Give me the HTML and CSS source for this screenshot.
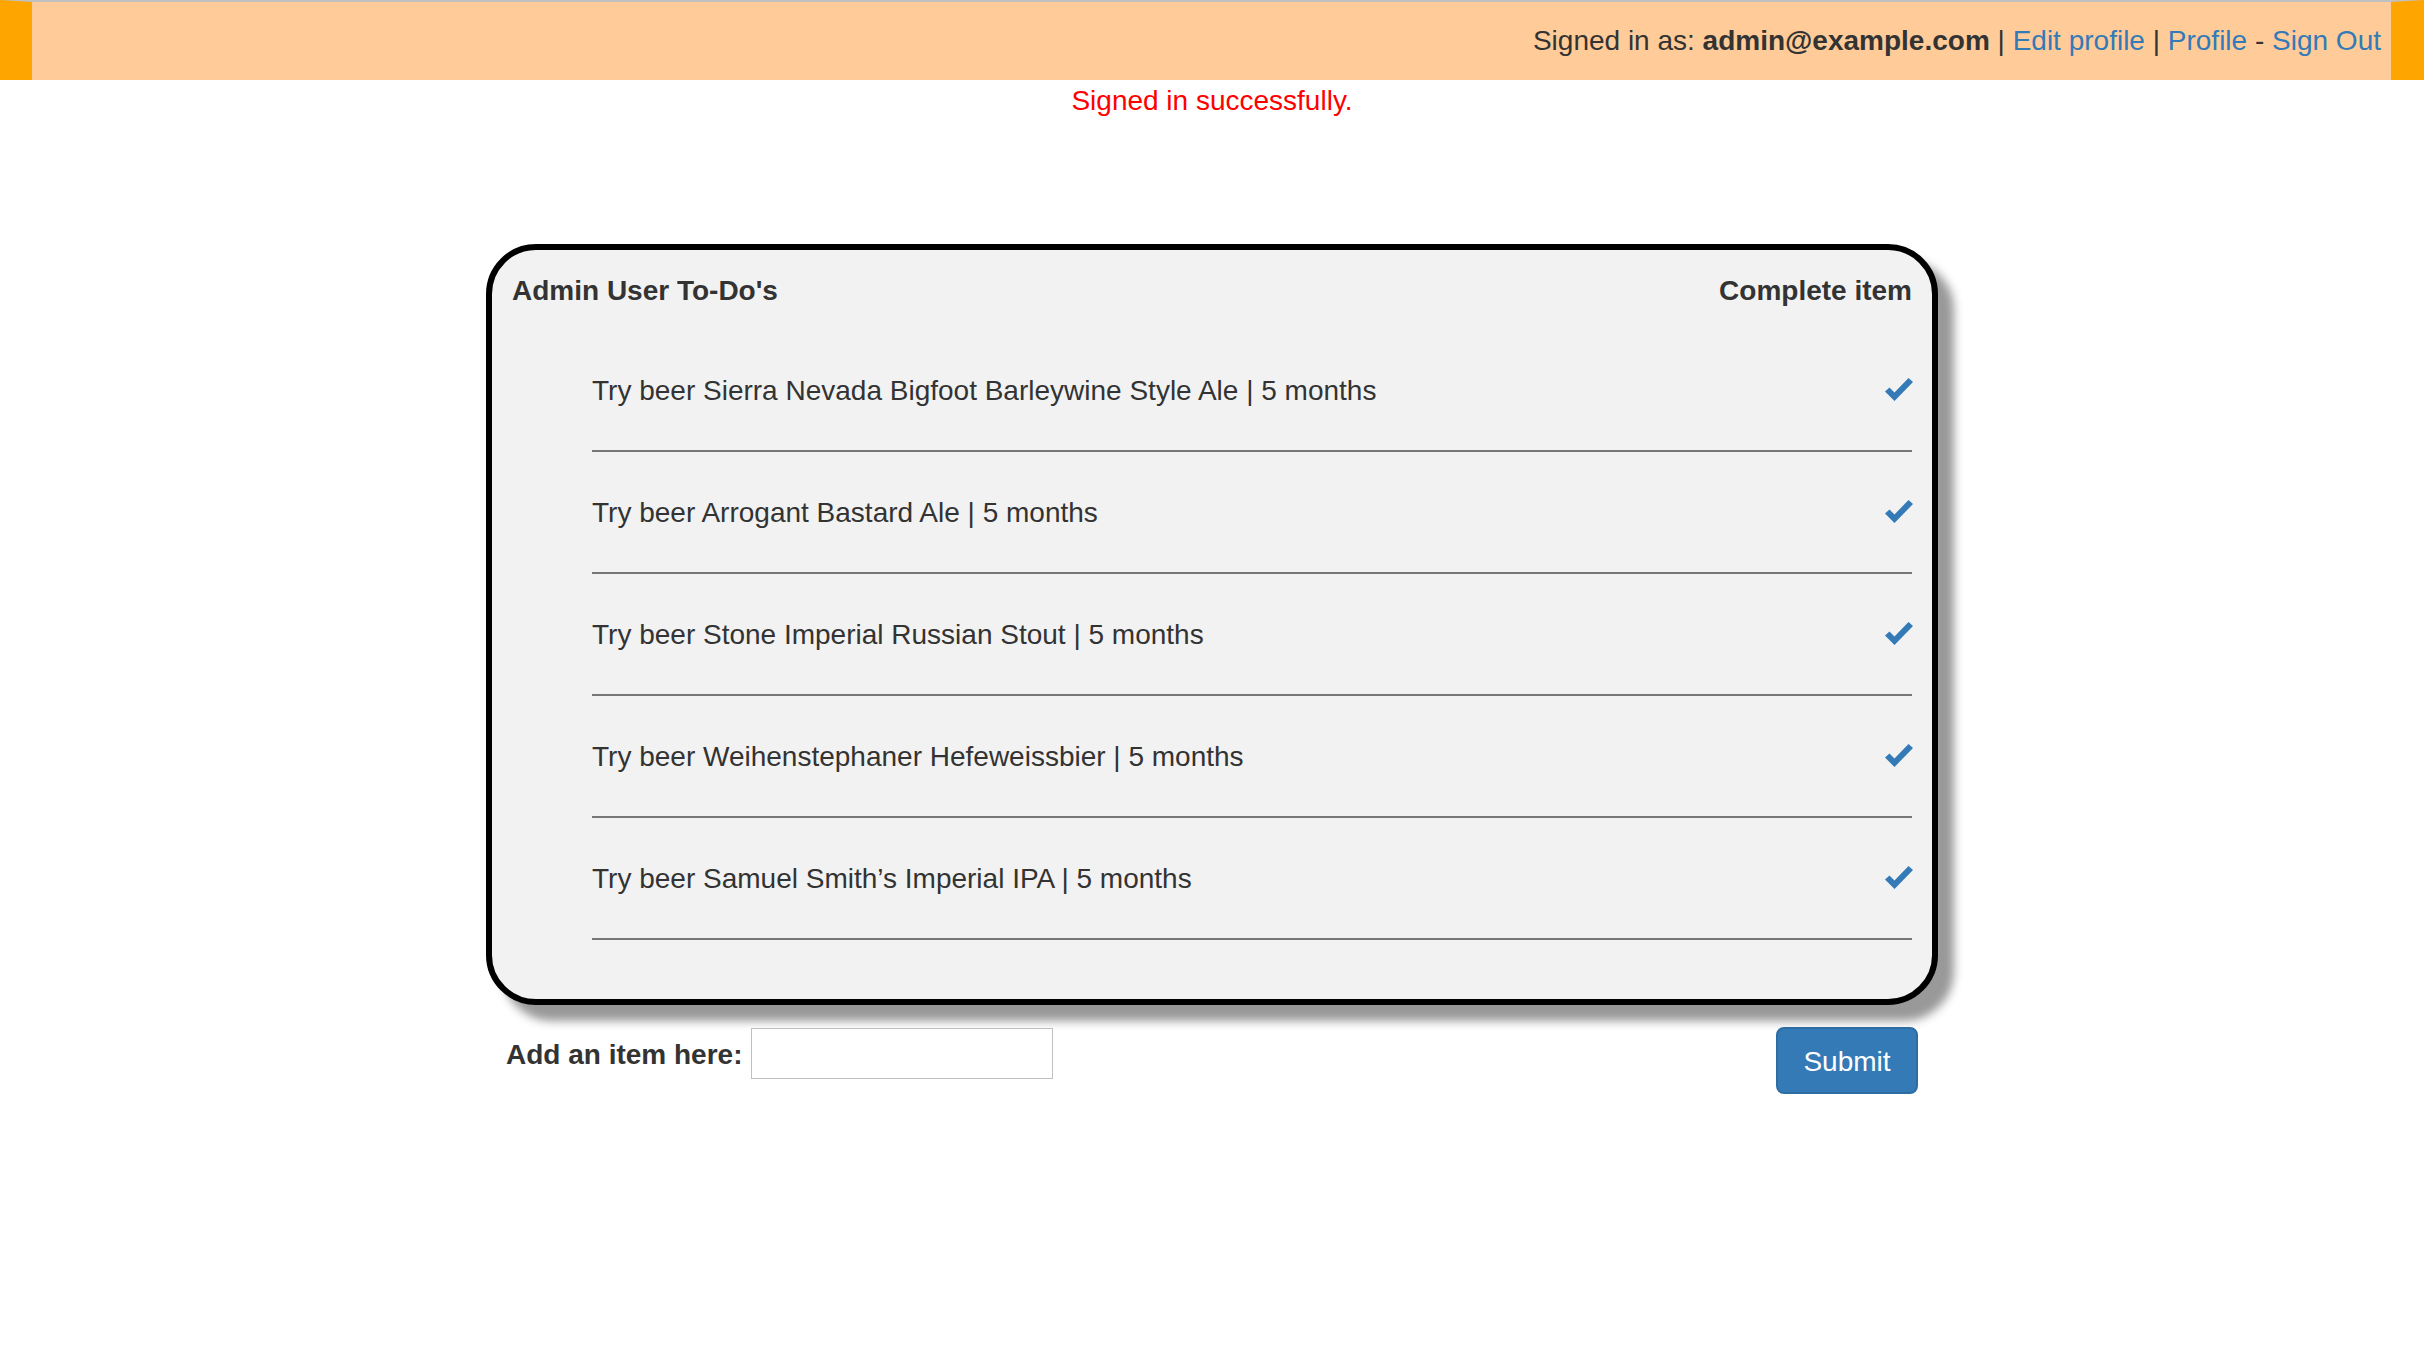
FILE: index.html
```html
<!DOCTYPE html>
<html>
<head>
<meta charset="utf-8">
<title>To-Do</title>
<link rel="stylesheet" href="styles.css">
</head>
<body>
<header class="topbar">
  <span>Signed in as: <strong>admin@example.com</strong> | <a href="#">Edit profile</a> | <a href="#">Profile</a> - <a href="#">Sign Out</a></span>
</header>
<p class="flash">Signed in successfully.</p>
<main class="card">
  <div class="card-head">
    <span>Admin User To-Do's</span>
    <span>Complete item</span>
  </div>
  <ul class="items">
    <li class="item"><span>Try beer Sierra Nevada Bigfoot Barleywine Style Ale | 5 months</span><svg class="check" viewBox="0 0 28 24" width="28" height="24"><polygon points="0,14.5 4.5,10.5 9.5,15.5 23.5,1 28,5 9.5,24" fill="#337ab7"/></svg></li>
    <li class="item"><span>Try beer Arrogant Bastard Ale | 5 months</span><svg class="check" viewBox="0 0 28 24" width="28" height="24"><polygon points="0,14.5 4.5,10.5 9.5,15.5 23.5,1 28,5 9.5,24" fill="#337ab7"/></svg></li>
    <li class="item"><span>Try beer Stone Imperial Russian Stout | 5 months</span><svg class="check" viewBox="0 0 28 24" width="28" height="24"><polygon points="0,14.5 4.5,10.5 9.5,15.5 23.5,1 28,5 9.5,24" fill="#337ab7"/></svg></li>
    <li class="item"><span>Try beer Weihenstephaner Hefeweissbier | 5 months</span><svg class="check" viewBox="0 0 28 24" width="28" height="24"><polygon points="0,14.5 4.5,10.5 9.5,15.5 23.5,1 28,5 9.5,24" fill="#337ab7"/></svg></li>
    <li class="item"><span>Try beer Samuel Smith’s Imperial IPA | 5 months</span><svg class="check" viewBox="0 0 28 24" width="28" height="24"><polygon points="0,14.5 4.5,10.5 9.5,15.5 23.5,1 28,5 9.5,24" fill="#337ab7"/></svg></li>
  </ul>
</main>
<form class="add-form">
  <label class="add-label">Add an item here: <input class="add-input" type="text"></label>
  <button class="btn" type="button">Submit</button>
</form>
</body>
</html>
```
FILE: styles.css
```css
html, body {
  margin: 0;
  padding: 0;
  background: #fff;
}
body {
  font-family: "Liberation Sans", Arial, Helvetica, sans-serif;
  font-size: 28px;
  line-height: 40px;
  color: #333;
}
a {
  color: #337ab7;
  text-decoration: none;
}
.topbar {
  box-sizing: border-box;
  height: 80px;
  border-top: 2px solid #c0c0c0;
  border-left: 32px solid #ffa500;
  border-right: 33px solid #ffa500;
  background: #ffcc99;
  display: flex;
  justify-content: flex-end;
  align-items: center;
  padding-right: 10px;
}
.flash {
  margin: 0;
  padding-top: 1px;
  text-align: center;
  color: #ff0000;
  height: 39px;
}
.card {
  display: block;
  box-sizing: border-box;
  width: 1452px;
  margin: 124px auto 0;
  border: 6px solid #000;
  border-radius: 50px;
  background: #f2f2f2;
  box-shadow: 16px 16px 10px #999;
  padding: 21px 20px 59px 20px;
}
.card-head {
  display: flex;
  justify-content: space-between;
  font-weight: bold;
}
.items {
  list-style: none;
  margin: 19px 0 0 80px;
  padding: 0;
}
.item {
  display: flex;
  justify-content: space-between;
  align-items: center;
  padding: 41px 0 39px;
  border-bottom: 2px solid #777;
}
.check {
  display: block;
  margin-right: -1px;
  margin-top: -4px;
}
.add-form {
  box-sizing: border-box;
  width: 1452px;
  margin: 22px auto 0;
  padding: 0 20px 0 20px;
  display: flex;
  justify-content: space-between;
  align-items: flex-start;
}
.add-label {
  font-weight: bold;
  display: flex;
  align-items: flex-start;
  padding-top: 8px;
}
.add-input {
  box-sizing: border-box;
  width: 302px;
  height: 51px;
  margin: -7px 0 0 9px;
  border: 1px solid #c0c0c0;
  background: #fff;
  font: inherit;
  padding: 0 8px;
}
.btn {
  box-sizing: border-box;
  width: 142px;
  height: 67px;
  background: #337ab7;
  border: 2px solid #2e6da4;
  border-radius: 8px;
  color: #fff;
  font-family: "Liberation Sans", Arial, Helvetica, sans-serif;
  font-size: 28px;
  line-height: 40px;
  padding: 2px 0 0;
}
```
